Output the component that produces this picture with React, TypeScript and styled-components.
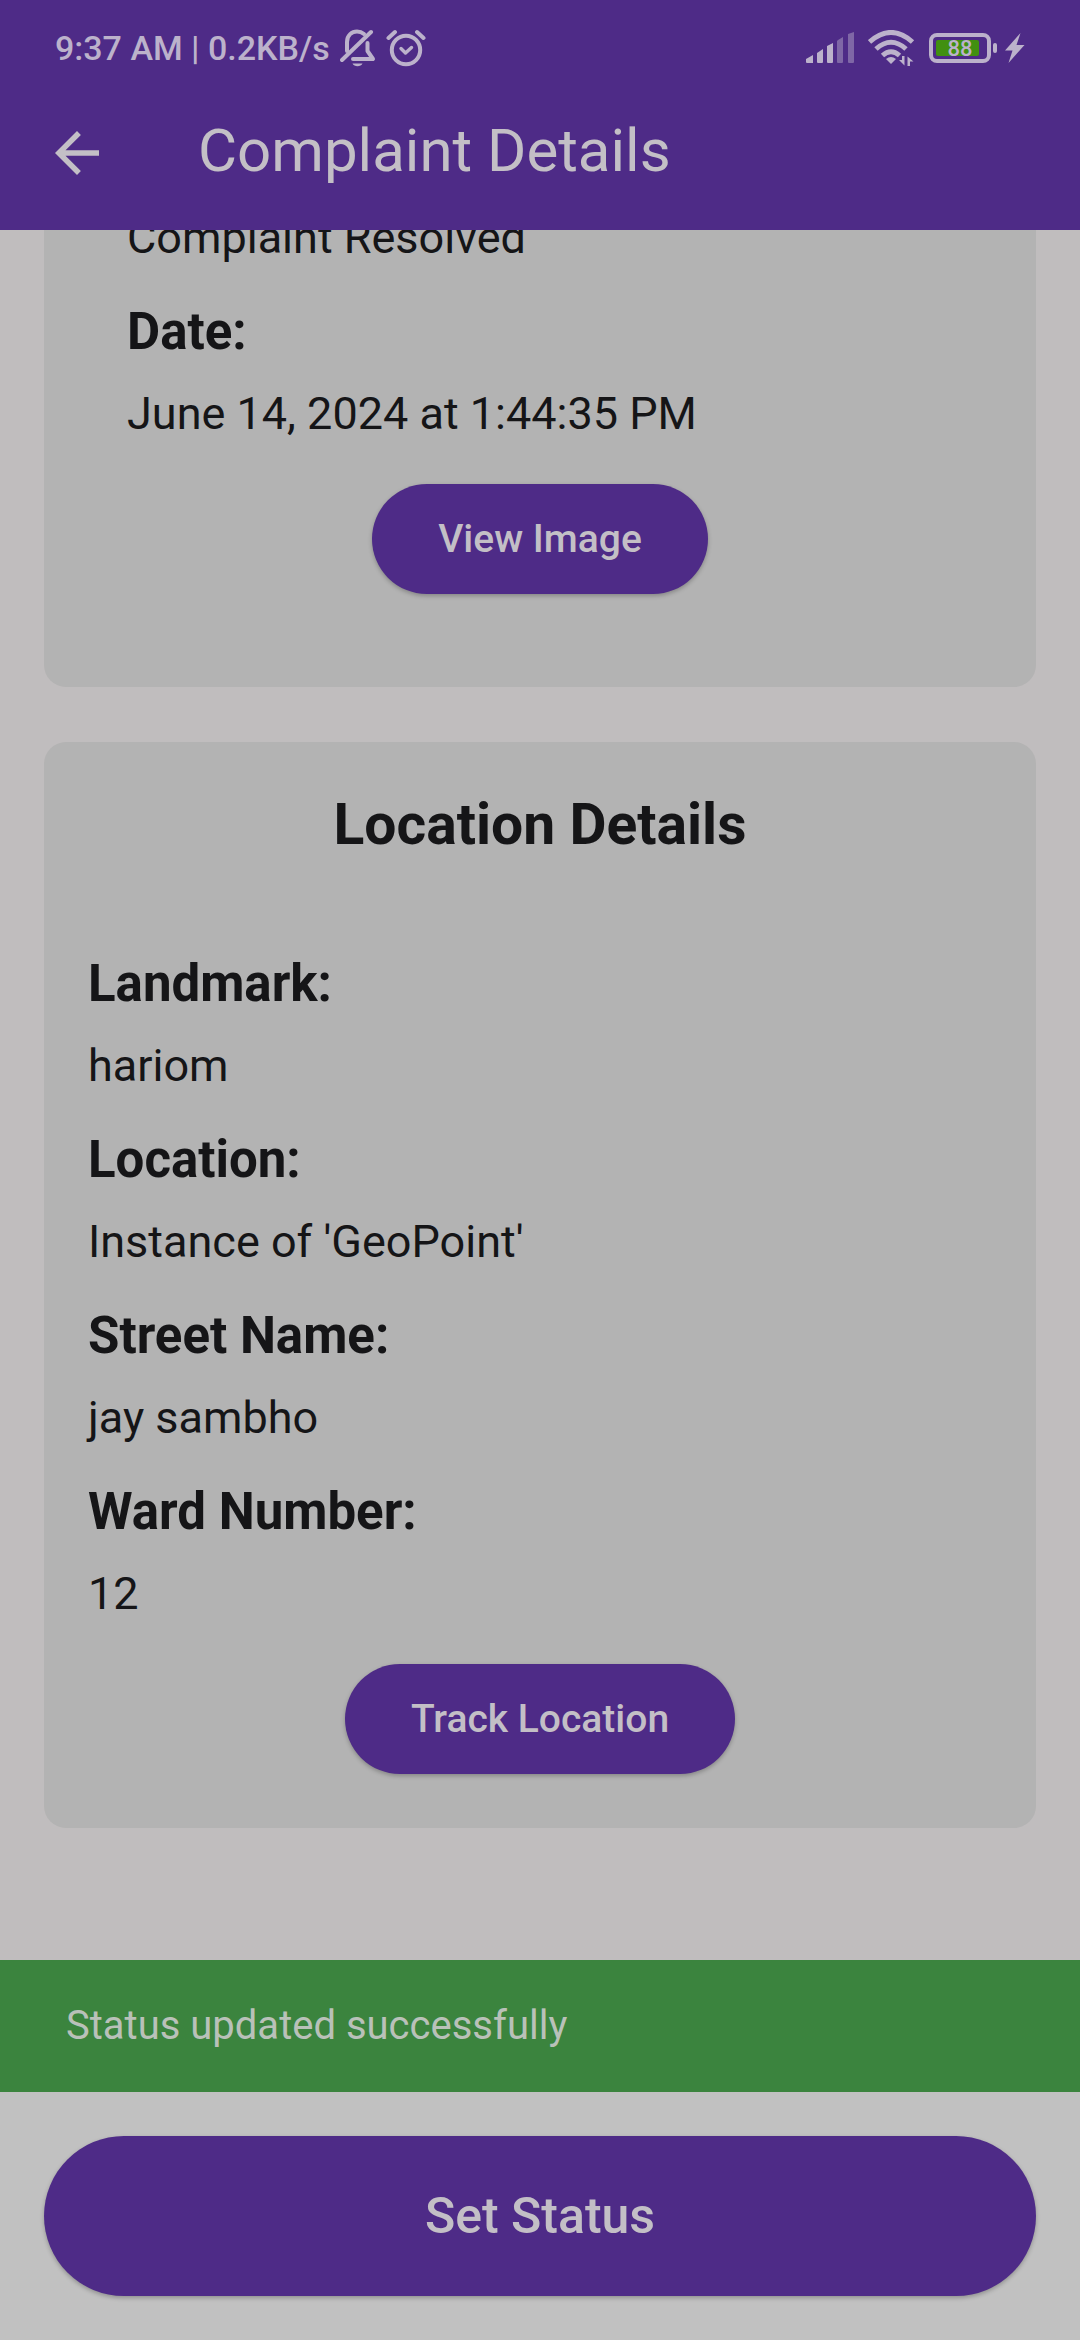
import React from "react";
import styled, { createGlobalStyle } from "styled-components";

const color = {
  primary: "#4e2b87",
  page: "#c0bdbe",
  bar: "#c1c1c1",
  card: "#b3b3b3",
  ink: "#151517",
  onPrimary: "#c3bfc6",
  system: "#bcb2cb",
  success: "#3b843e",
  onSuccess: "#b9c1b9",
};

const GlobalStyle = createGlobalStyle`
  * { box-sizing: border-box; }
  body {
    margin: 0;
    background: ${color.page};
    color: ${color.ink};
    font-family: Roboto, "Liberation Sans", sans-serif;
  }
  button { font-family: inherit; cursor: pointer; }
`;

const Screen = styled.div`
  display: flex;
  flex-direction: column;
  height: 100vh;
`;

const Header = styled.header`
  flex: none;
  background: ${color.primary};
  color: ${color.onPrimary};
`;

const StatusBar = styled.div`
  display: flex;
  align-items: center;
  justify-content: space-between;
  height: 76px;
  padding: 20px 55px 0;
  color: ${color.system};
  font-size: 34px;
  font-weight: 500;
  line-height: 40px;
`;

const StatusGroup = styled.div<{ $gap: number }>`
  display: flex;
  align-items: center;
  gap: ${(p) => p.$gap}px;

  svg {
    display: block;
    flex: none;
  }
`;

const AppBar = styled.div`
  display: flex;
  align-items: center;
  gap: 88px;
  height: 154px;
  padding: 0 44px;
`;

const BackButton = styled.button`
  display: flex;
  padding: 0;
  border: 0;
  background: none;
  color: inherit;
`;

const PageTitle = styled.h1`
  margin: 0;
  padding-bottom: 4px;
  font-size: 60px;
  font-weight: 400;
  line-height: 72px;
`;

const Content = styled.main`
  display: flex;
  flex: 1;
  flex-direction: column;
  justify-content: flex-end;
  gap: 55px;
  min-height: 0;
  padding: 0 44px 132px;
  overflow: hidden;
`;

const Card = styled.section`
  flex: none;
  padding: 44px 44px 54px;
  border-radius: 22px;
  background: ${color.card};
`;

const Inset = styled.div`
  padding: 39px;
`;

const CardTitle = styled.h2`
  margin: 0 0 84px;
  font-size: 57px;
  font-weight: 700;
  line-height: 78px;
  text-align: center;
`;

const Fields = styled.dl`
  display: flex;
  flex-direction: column;
  gap: 26px;
  margin: 0 0 38px;
`;

const Label = styled.dt`
  margin-bottom: 14px;
  font-size: 51px;
  font-weight: 700;
  line-height: 72px;
`;

const Value = styled.dd`
  margin: 0;
  font-size: 45px;
  line-height: 64px;
`;

const PillButton = styled.button<{ $large?: boolean }>`
  display: block;
  width: ${(p) => (p.$large ? "100%" : "auto")};
  height: ${(p) => (p.$large ? 160 : 110)}px;
  margin: 0 auto;
  padding: 0 66px;
  border: 0;
  border-radius: 80px;
  background: ${color.primary};
  box-shadow: 0 2px 4px rgba(0, 0, 0, 0.25);
  color: ${color.onPrimary};
  font-size: ${(p) => (p.$large ? 50 : 39)}px;
  font-weight: 500;
`;

const Snackbar = styled.div`
  flex: none;
  padding: 42px 66px;
  background: ${color.success};
  color: ${color.onSuccess};
  font-size: 40px;
  line-height: 48px;
`;

const BottomBar = styled.footer`
  flex: none;
  padding: 44px;
  background: ${color.bar};
`;

const BellOffIcon = () => (
  <svg width="36" height="38" viewBox="0 0 36 38" fill="none" stroke="currentColor" strokeWidth="4" strokeLinecap="round" strokeLinejoin="round">
    <path d="M2 31 31 3" />
    <path d="M7 22V13C7 6 12 2.500 17 2.500C20 2.500 22 3.300 24 5" />
    <path d="M27.500 14V22L33 30H13" />
    <path d="M12.500 34.500H22.500C21 38 14 38 12.500 34.500Z" fill="currentColor" stroke="none" />
  </svg>
);

const AlarmIcon = () => (
  <svg width="40" height="38" viewBox="0 0 40 38" fill="none" stroke="currentColor" strokeWidth="4" strokeLinecap="round" strokeLinejoin="round">
    <circle cx="20" cy="21" r="14.200" />
    <path d="M2.500 9 9 3M37.500 9 31 3" />
    <path d="M15 19.500 19.500 24 25.500 18.500" strokeWidth="3.400" />
  </svg>
);

const SignalIcon = () => (
  <svg width="48" height="32" viewBox="0 0 48 32" fill="currentColor">
    <path d="M0 27 7 23V31H1Q0 31 0 30ZM11 21 17 17V30Q17 31 16 31H12Q11 31 11 30ZM21 14 27 11V30Q27 31 26 31H22Q21 31 21 30Z" />
    <path d="M32 8 37 5V30Q37 31 36 31H32Q31 31 31 30V9ZM42 2 48 0V30Q48 31 47 31H43Q42 31 42 30Z" opacity="0.45" />
  </svg>
);

const WifiIcon = () => (
  <svg width="47" height="36" viewBox="0 0 47 36" fill="none" stroke="currentColor" strokeWidth="5">
    <path d="M1.500 12Q23 -7 44.500 12" />
    <path d="M8 19Q23 5.500 38 19" />
    <path d="M14.500 25.500Q23 18 31.500 25.500" />
    <path d="M18 29Q23 25 28 29L23 34Z" fill="currentColor" stroke="none" />
    <path d="M36.500 26V35.500L31 30H34V26ZM39.500 36V26.500L45.500 31.500H42V36Z" fill="currentColor" stroke="none" />
  </svg>
);

const BatteryIcon = () => (
  <svg width="68" height="30" viewBox="0 0 68 30">
    <rect x="7" y="7" width="43" height="16" rx="2" fill="#419010" />
    <rect x="2" y="2" width="58" height="26" rx="6" fill="none" stroke="currentColor" strokeWidth="4" />
    <rect x="64" y="10" width="4" height="10" rx="2" fill="currentColor" />
    <text x="31" y="23" textAnchor="middle" fill="currentColor" fontFamily="Roboto, sans-serif" fontSize="22" fontWeight="500">
      88
    </text>
  </svg>
);

const BoltIcon = () => (
  <svg width="20" height="30" viewBox="0 0 20 30" fill="currentColor">
    <path d="M15.500 0 0 17.500H7.500L3.500 30 19.500 12H11.500Z" />
  </svg>
);

const BackIcon = () => (
  <svg width="66" height="66" viewBox="0 0 24 24" fill="currentColor">
    <path d="M20 11H7.830l5.590-5.590L12 4l-8 8 8 8 1.410-1.410L7.830 13H20v-2z" />
  </svg>
);

type Entry = { label?: string; value: string };

const resolution: Entry[] = [
  { value: "Complaint Resolved" },
  { label: "Date:", value: "June 14, 2024 at 1:44:35 PM" },
];

const location: Entry[] = [
  { label: "Landmark:", value: "hariom" },
  { label: "Location:", value: "Instance of 'GeoPoint'" },
  { label: "Street Name:", value: "jay sambho" },
  { label: "Ward Number:", value: "12" },
];

const FieldList = ({ entries }: { entries: Entry[] }) => (
  <Fields>
    {entries.map((e) => (
      <div key={e.value}>
        {e.label && <Label>{e.label}</Label>}
        <Value>{e.value}</Value>
      </div>
    ))}
  </Fields>
);

export default function App() {
  return (
    <Screen>
      <GlobalStyle />
      <Header>
        <StatusBar>
          <StatusGroup $gap={10}>
            <span>9:37 AM | 0.2KB/s</span>
            <BellOffIcon />
            <AlarmIcon />
          </StatusGroup>
          <StatusGroup $gap={14}>
            <SignalIcon />
            <WifiIcon />
            <StatusGroup $gap={8}>
              <BatteryIcon />
              <BoltIcon />
            </StatusGroup>
          </StatusGroup>
        </StatusBar>
        <AppBar>
          <BackButton type="button" aria-label="Back">
            <BackIcon />
          </BackButton>
          <PageTitle>Complaint Details</PageTitle>
        </AppBar>
      </Header>
      <Content>
        <Card>
          <Inset>
            <FieldList entries={resolution} />
            <PillButton type="button">View Image</PillButton>
          </Inset>
        </Card>
        <Card>
          <CardTitle>Location Details</CardTitle>
          <FieldList entries={location} />
          <PillButton type="button">Track Location</PillButton>
        </Card>
      </Content>
      <Snackbar role="status">Status updated successfully</Snackbar>
      <BottomBar>
        <PillButton type="button" $large>
          Set Status
        </PillButton>
      </BottomBar>
    </Screen>
  );
}
